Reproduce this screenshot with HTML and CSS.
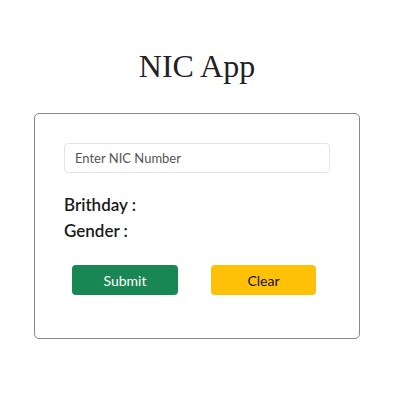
FILE: index.html
```html
<!DOCTYPE html>
<html>
<head>
<meta charset="utf-8">
<link rel="stylesheet" href="styles.css">
</head>
<body>
<h1 class="title">NIC App</h1>
<div class="card">
  <input class="nic-input" type="text" placeholder="Enter NIC Number">
  <div class="info">
    <div class="info-row">Brithday :</div>
    <div class="info-row">Gender :</div>
  </div>
  <div class="actions">
    <button class="btn btn-submit">Submit</button>
    <button class="btn btn-clear">Clear</button>
  </div>
</div>
</body>
</html>
```
FILE: styles.css
```css
* { box-sizing: border-box; }
html, body { background: #fff; }
body {
  margin: 0;
  padding: 0 6px 0 0;
  font-family: Lato, "Open Sans", sans-serif;
}
.title {
  margin: 0;
  padding-top: 45px;
  height: 113px;
  text-align: center;
  font-family: "Liberation Serif", serif;
  font-weight: normal;
  font-size: 32px;
  line-height: 42px;
  color: #222;
}
.card {
  width: 326px;
  margin: 0 auto;
  border: 1px solid #888;
  border-radius: 5px;
  padding: 29px 29px 43px 29px;
}
.nic-input {
  display: block;
  width: 266px;
  height: 30px;
  border: 1px solid #e4e4e4;
  border-radius: 4px;
  padding: 0 10px;
  font-family: Lato, sans-serif;
  font-size: 13px;
  color: #333;
  outline: none;
}
.nic-input::placeholder { color: #555; }
.info {
  margin-top: 19px;
  display: flex;
  flex-direction: column;
}
.info-row {
  font-size: 17px;
  font-weight: 600;
  line-height: 26px;
  color: #1a1a1a;
}
.actions {
  margin-top: 21px;
  padding-left: 8px;
  display: flex;
  gap: 33px;
}
.btn {
  width: 106px;
  height: 30px;
  border: none;
  border-radius: 4px;
  font-family: Lato, sans-serif;
  font-size: 14px;
  cursor: pointer;
}
.btn-submit { background: #198754; color: #fff; }
.btn-clear { background: #ffc107; color: #111; width: 105px; }
```
